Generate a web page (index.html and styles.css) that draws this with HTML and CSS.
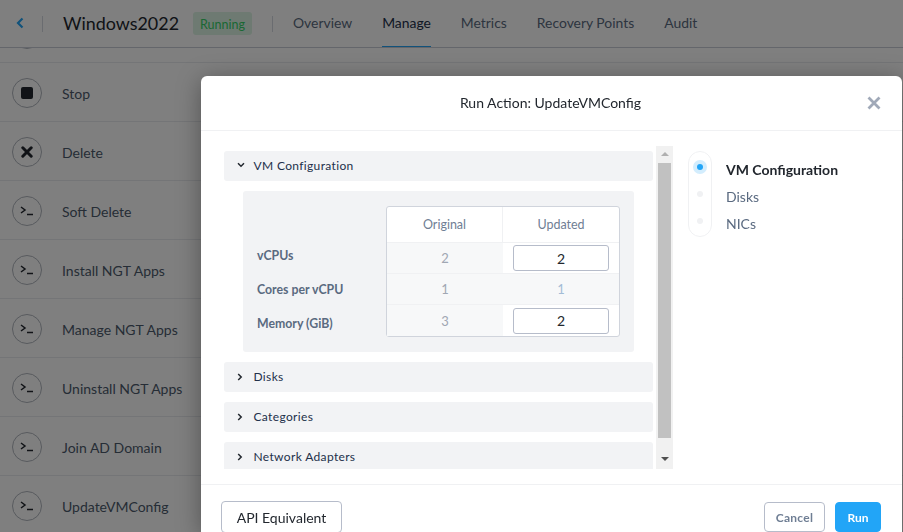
FILE: index.html
```html
<!DOCTYPE html>
<html lang="en">
<head>
<meta charset="utf-8">
<title>Windows2022</title>
<link rel="stylesheet" href="styles.css">
</head>
<body>
<div class="page">
  <header class="topbar">
    <svg class="back" width="10" height="12" viewBox="0 0 10 12"><path d="M7.500 1.500 3 6l4.500 4.500" fill="none" stroke="#22a5f7" stroke-width="2.200"/></svg>
    <span class="vsep first"></span>
    <span class="vmname">Windows2022</span>
    <span class="badge">Running</span>
    <span class="vsep second"></span>
    <nav class="tabs">
      <a class="tab">Overview</a>
      <a class="tab active">Manage</a>
      <a class="tab">Metrics</a>
      <a class="tab">Recovery Points</a>
      <a class="tab">Audit</a>
    </nav>
  </header>
  <div class="list">
    <div class="rows">
      <div class="row"><span class="circle"></span></div>
      <div class="row"><span class="circle"><svg width="12" height="12" viewBox="0 0 12 12"><rect width="12" height="12" rx="2" fill="#22272e"/></svg></span><span class="rowlabel">Stop</span></div>
      <div class="row"><span class="circle"><svg width="12" height="12" viewBox="0 0 12 12"><path d="M1.800 1.800l8.400 8.400M10.200 1.800l-8.400 8.400" stroke="#22272e" stroke-width="3" stroke-linecap="round"/></svg></span><span class="rowlabel">Delete</span></div>
      <div class="row"><span class="circle"><svg class="prompt" width="14" height="10" viewBox="0 0 14 10"><path d="M1 1l4 3-4 3" fill="none" stroke="#22272e" stroke-width="1.500"/><path d="M7 8.500h6" stroke="#22272e" stroke-width="1.500"/></svg></span><span class="rowlabel">Soft Delete</span></div>
      <div class="row"><span class="circle"><svg class="prompt" width="14" height="10" viewBox="0 0 14 10"><path d="M1 1l4 3-4 3" fill="none" stroke="#22272e" stroke-width="1.500"/><path d="M7 8.500h6" stroke="#22272e" stroke-width="1.500"/></svg></span><span class="rowlabel">Install NGT Apps</span></div>
      <div class="row"><span class="circle"><svg class="prompt" width="14" height="10" viewBox="0 0 14 10"><path d="M1 1l4 3-4 3" fill="none" stroke="#22272e" stroke-width="1.500"/><path d="M7 8.500h6" stroke="#22272e" stroke-width="1.500"/></svg></span><span class="rowlabel">Manage NGT Apps</span></div>
      <div class="row"><span class="circle"><svg class="prompt" width="14" height="10" viewBox="0 0 14 10"><path d="M1 1l4 3-4 3" fill="none" stroke="#22272e" stroke-width="1.500"/><path d="M7 8.500h6" stroke="#22272e" stroke-width="1.500"/></svg></span><span class="rowlabel">Uninstall NGT Apps</span></div>
      <div class="row"><span class="circle"><svg class="prompt" width="14" height="10" viewBox="0 0 14 10"><path d="M1 1l4 3-4 3" fill="none" stroke="#22272e" stroke-width="1.500"/><path d="M7 8.500h6" stroke="#22272e" stroke-width="1.500"/></svg></span><span class="rowlabel">Join AD Domain</span></div>
      <div class="row"><span class="circle"><svg class="prompt" width="14" height="10" viewBox="0 0 14 10"><path d="M1 1l4 3-4 3" fill="none" stroke="#22272e" stroke-width="1.500"/><path d="M7 8.500h6" stroke="#22272e" stroke-width="1.500"/></svg></span><span class="rowlabel">UpdateVMConfig</span></div>
    </div>
  </div>
</div>
<div class="overlay"></div>
<section class="modal">
  <div class="modal-head">
    <span class="modal-title">Run Action: UpdateVMConfig</span>
    <svg class="close" width="14" height="14" viewBox="0 0 14 14"><path d="M1.500 1.500l11 11M12.500 1.500l-11 11" stroke="#a0a9b8" stroke-width="2.800"/></svg>
  </div>
  <div class="modal-body">
    <div class="scroll-area">
      <div class="scroll-content">
        <div class="acc-bar"><svg class="chev" width="8" height="6" viewBox="0 0 8 6"><path d="M1 1.200 4 4.200 7 1.200" fill="none" stroke="#22272e" stroke-width="1.500"/></svg><span>VM Configuration</span></div>
        <div class="panel">
          <div class="labels">
            <span class="lab">vCPUs</span>
            <span class="lab">Cores per vCPU</span>
            <span class="lab">Memory (GiB)</span>
          </div>
          <div class="table">
            <div class="cell head">Original</div>
            <div class="cell head">Updated</div>
            <div class="cell shade num">2</div>
            <div class="cell"><span class="input">2</span></div>
            <div class="cell shade num">1</div>
            <div class="cell shade num blue">1</div>
            <div class="cell shade num">3</div>
            <div class="cell"><span class="input">2</span></div>
          </div>
        </div>
        <div class="acc-bar spaced"><svg class="chev" width="6" height="8" viewBox="0 0 6 8"><path d="M1.200 1 4.200 4 1.200 7" fill="none" stroke="#22272e" stroke-width="1.500"/></svg><span>Disks</span></div>
        <div class="acc-bar"><svg class="chev" width="6" height="8" viewBox="0 0 6 8"><path d="M1.200 1 4.200 4 1.200 7" fill="none" stroke="#22272e" stroke-width="1.500"/></svg><span>Categories</span></div>
        <div class="acc-bar"><svg class="chev" width="6" height="8" viewBox="0 0 6 8"><path d="M1.200 1 4.200 4 1.200 7" fill="none" stroke="#22272e" stroke-width="1.500"/></svg><span>Network Adapters</span></div>
      </div>
      <div class="scrollbar">
        <span class="arrow up"></span>
        <span class="thumb"></span>
        <span class="arrow down"></span>
      </div>
    </div>
    <aside class="stepper">
      <div class="pill">
        <span class="dot current"></span>
        <span class="dot"></span>
        <span class="dot"></span>
      </div>
      <div class="steps">
        <span class="step current">VM Configuration</span>
        <span class="step">Disks</span>
        <span class="step">NICs</span>
      </div>
    </aside>
  </div>
  <div class="modal-foot">
    <button class="btn api">API Equivalent</button>
    <span class="foot-right">
      <button class="btn cancel">Cancel</button>
      <button class="btn run">Run</button>
    </span>
  </div>
</section>
</body>
</html>
```
FILE: styles.css
```css
* { box-sizing: border-box; }
html, body { margin: 0; padding: 0; height: 100%; overflow: hidden; }
body { font-family: Lato, "Noto Sans", "Liberation Sans", sans-serif; background: #fff; color: #22272e; }

.page { height: 532px; display: flex; flex-direction: column; overflow: hidden; background: #fff; }

.topbar { height: 48px; flex: none; display: flex; align-items: center; border-bottom: 1px solid #c8cdd6; padding-left: 15px; }
.back { flex: none; margin-top: -1px; }
.vsep { width: 1px; height: 16px; background: #d5d9e0; flex: none; }
.vsep.first { margin-left: 17px; }
.vsep.second { margin-left: 20px; }
.vmname { font-size: 17.900px; color: #22272e; margin-left: 20px; margin-top: -2px; }
.badge { margin-left: 14px; height: 23px; width: 59px; display: flex; align-items: center; justify-content: center; background: #dcf5e4; color: #36d068; border-radius: 3px; font-size: 12.500px; padding-top: 1px; }
.tabs { display: flex; height: 47px; margin-left: 20px; gap: 30px; }
.tab { font-size: 13.900px; color: #5a6a80; display: flex; align-items: center; border-bottom: 1px solid transparent; padding-bottom: 2px; }
.tab.active { color: #22304a; border-bottom-color: #22a5f7; }

.list { flex: 1; overflow: hidden; min-height: 0; }
.rows { margin-top: -44px; }
.row { height: 59px; display: flex; align-items: center; border-bottom: 1px solid #e8eaee; padding: 2px 0 0 12px; gap: 20px; }
.circle { width: 30px; height: 30px; border: 1px solid #b0b5bd; border-radius: 50%; display: flex; align-items: center; justify-content: center; flex: none; background: #fff; }
.prompt { margin-top: -1px; }
.rowlabel { font-size: 14px; color: #4c5a6c; }

.overlay { position: fixed; inset: 0; background: rgba(0, 0, 0, .5); }

.modal { position: absolute; left: 201px; top: 76px; width: 701px; height: 456px; background: #fff; border-radius: 6px 6px 0 0; box-shadow: 0 4px 24px rgba(0, 0, 0, .35); display: flex; flex-direction: column; overflow: hidden; }
.modal-head { height: 55px; flex: none; display: flex; align-items: center; justify-content: center; border-bottom: 1px solid #f0f1f3; position: relative; }
.modal-title { font-size: 14px; color: #22272e; margin: -1px 2px 0 0; }
.close { position: absolute; right: 21px; top: 20px; }

.modal-body { height: 354px; flex: none; display: flex; border-bottom: 1px solid #f0f1f3; padding: 15px 0 15px 23px; }
.scroll-area { display: flex; width: 449px; height: 323px; flex: none; }
.scroll-content { width: 429px; margin-top: 5px; overflow: hidden; flex: none; }
.acc-bar { height: 30px; background: #f2f3f5; border-radius: 3px; display: flex; align-items: center; font-size: 12px; letter-spacing: .35px; color: #22304a; margin-bottom: 10px; position: relative; padding: 0 0 1px 29.500px; }
.acc-bar.spaced { margin-top: 10px; }
.chev { position: absolute; left: 13px; top: 11px; }

.panel { margin-left: 19px; width: 391px; height: 161px; background: #f2f3f5; border-radius: 3px; display: flex; padding: 15px 14px 15px 14px; }
.labels { width: 129px; flex: none; display: flex; flex-direction: column; padding-top: 32px; }
.lab { height: 34px; flex: none; display: flex; align-items: center; font-size: 12.300px; font-weight: 700; color: #5a6a80; }
.table { width: 234px; height: 131px; background: #fff; border: 1px solid #d0d4dc; border-radius: 3px; display: grid; grid-template-columns: 116px 1fr; grid-template-rows: 35px 31px 31px 1fr; }
.cell { display: flex; align-items: center; justify-content: center; font-size: 12px; color: #22272e; border-top: 1px solid #f0f1f3; }
.cell.head { border-top: 0; color: #6f7e94; font-size: 12.500px; }
.cell.head:first-child { border-right: 1px solid #f0f1f3; }
.cell.shade { background: #f7f8f9; }
.cell.num { color: #a0a7b3; font-size: 13px; }
.cell.num.blue { color: #a3bcd6; }
.input { width: 96px; height: 26px; background: #fff; border: 1px solid #b6bcca; border-radius: 3px; display: flex; align-items: center; justify-content: center; font-size: 14px; color: #22272e; }

.scrollbar { width: 17px; margin-left: 3px; background: #f1f1f1; display: flex; flex-direction: column; align-items: center; flex: none; position: relative; }
.thumb { width: 13px; height: 275px; background: #c1c1c1; margin-top: 7px; }
.arrow { width: 0; height: 0; border-left: 4px solid transparent; border-right: 4px solid transparent; }
.arrow.up { border-bottom: 4px solid #b0b0b0; margin-top: 6px; }
.arrow.down { border-top: 4px solid #505050; margin-top: 19px; }

.stepper { display: flex; margin-left: 15px; margin-top: 5px; }
.pill { width: 24px; height: 86px; border: 1px solid #f0f1f3; border-radius: 12px; display: flex; flex-direction: column; align-items: center; position: relative; padding-top: 12px; gap: 21px; flex: none; }
.dot { width: 6px; height: 6px; background: #f0f1f3; border-radius: 50%; position: relative; }
.dot.current { background: #22a5f7; box-shadow: 0 0 0 4px #d3edfd; }
.steps { display: flex; flex-direction: column; margin-left: 14px; padding-top: 5px; }
.step { height: 27px; display: flex; align-items: center; font-size: 14px; color: #5a6a80; }
.step.current { color: #22272e; font-weight: 700; }

.modal-foot { flex: 1; display: flex; justify-content: space-between; padding: 16px 20px 0; align-items: flex-start; }
.foot-right { display: flex; gap: 10px; margin-right: 1px; margin-top: 1px; }
.btn { font-family: inherit; border-radius: 4px; background: #fff; height: 30px; border: 1px solid #b6bcca; padding: 0; display: flex; align-items: center; justify-content: center; }
.btn.api { width: 121px; height: 32px; font-size: 14px; color: #22272e; }
.btn.cancel { width: 61px; font-size: 12px; font-weight: 700; color: #6f7e94; letter-spacing: .3px; }
.btn.run { width: 46px; background: #22a5f7; border-color: #22a5f7; color: #fff; font-size: 12px; font-weight: 700; }
```
